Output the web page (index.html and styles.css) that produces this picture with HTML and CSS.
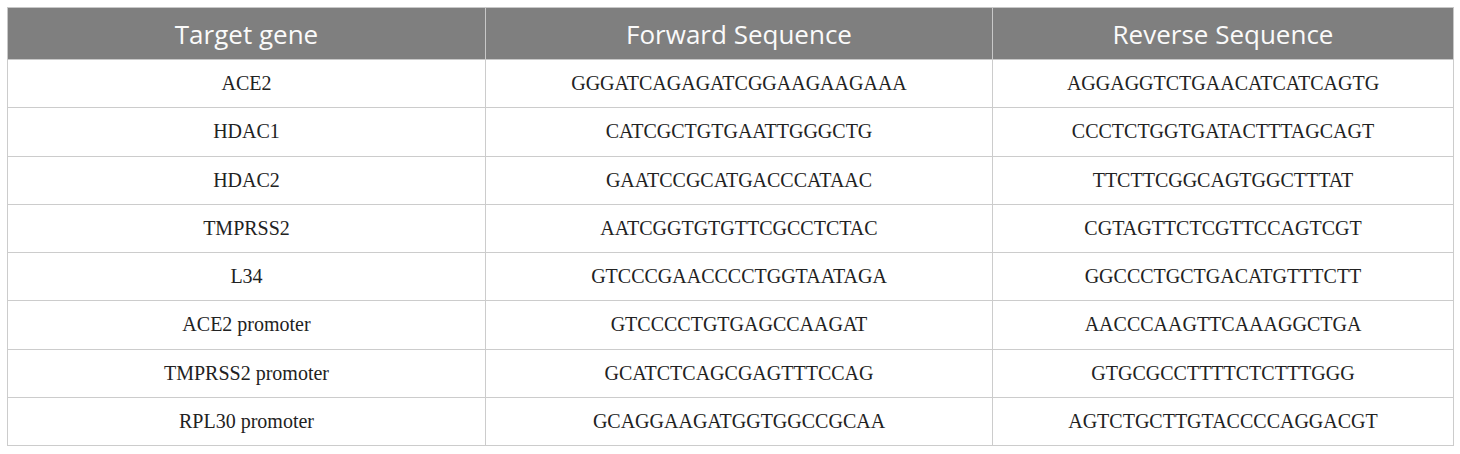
FILE: index.html
```html
<!DOCTYPE html>
<html>
<head>
<meta charset="utf-8">
<link rel="stylesheet" href="styles.css">
</head>
<body>
<table class="primers">
  <colgroup>
    <col class="c1"><col class="c2"><col class="c3">
  </colgroup>
  <thead>
    <tr><th>Target gene</th><th>Forward Sequence</th><th>Reverse Sequence</th></tr>
  </thead>
  <tbody>
    <tr><td>ACE2</td><td>GGGATCAGAGATCGGAAGAAGAAA</td><td>AGGAGGTCTGAACATCATCAGTG</td></tr>
    <tr><td>HDAC1</td><td>CATCGCTGTGAATTGGGCTG</td><td>CCCTCTGGTGATACTTTAGCAGT</td></tr>
    <tr><td>HDAC2</td><td>GAATCCGCATGACCCATAAC</td><td>TTCTTCGGCAGTGGCTTTAT</td></tr>
    <tr><td>TMPRSS2</td><td>AATCGGTGTGTTCGCCTCTAC</td><td>CGTAGTTCTCGTTCCAGTCGT</td></tr>
    <tr><td>L34</td><td>GTCCCGAACCCCTGGTAATAGA</td><td>GGCCCTGCTGACATGTTTCTT</td></tr>
    <tr><td>ACE2 promoter</td><td>GTCCCCTGTGAGCCAAGAT</td><td>AACCCAAGTTCAAAGGCTGA</td></tr>
    <tr><td>TMPRSS2 promoter</td><td>GCATCTCAGCGAGTTTCCAG</td><td>GTGCGCCTTTTCTCTTTGGG</td></tr>
    <tr><td>RPL30 promoter</td><td>GCAGGAAGATGGTGGCCGCAA</td><td>AGTCTGCTTGTACCCCAGGACGT</td></tr>
  </tbody>
</table>
</body>
</html>
```
FILE: styles.css
```css
html, body {
  margin: 0;
  padding: 0;
  background: #ffffff;
}
body {
  padding: 7px 7px 0 7px;
}
.primers {
  border-collapse: collapse;
  width: 1446px;
  table-layout: fixed;
}
.c1 { width: 478px; }
.c2 { width: 507px; }
.c3 { width: 461px; }
.primers th {
  background: #7f7f7f;
  color: #fafafa;
  font-family: "Open Sans", "Noto Sans", sans-serif;
  font-weight: 400;
  font-size: 26px;
  height: 51px;
  padding: 0;
  border: 1px solid #c8c8c8;
  text-align: center;
  vertical-align: middle;
}
.primers td {
  font-family: "Liberation Serif", "Times New Roman", serif;
  font-size: 20px;
  color: #222222;
  height: 47.25px;
  padding: 0;
  border: 1px solid #cccccc;
  text-align: center;
  vertical-align: middle;
}
```
